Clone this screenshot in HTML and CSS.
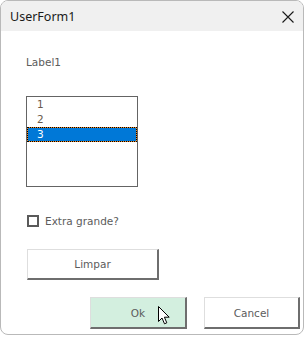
FILE: index.html
```html
<!DOCTYPE html>
<html lang="pt">
<head>
    <meta charset="UTF-8">
    <title>UserForm1</title>
    <link rel="stylesheet" href="styles.css">
</head>
<body>
    <div class="window">
        <div class="titlebar">
            <span class="title">UserForm1</span>
            <svg class="close" width="12" height="12" viewBox="0 0 12 12">
                <path d="M0.5 0.5 L11.5 11.5 M11.5 0.5 L0.5 11.5" stroke="#1a1a1a" stroke-width="1.1"/>
            </svg>
        </div>
        <div class="form">
            <div class="label">Label1</div>
            <div class="listbox">
                <div class="item">1</div>
                <div class="item">2</div>
                <div class="item selected">3</div>
            </div>
            <label class="check">
                <span class="box"></span>
                <span>Extra grande?</span>
            </label>
            <button class="btn btn-wide">Limpar</button>
            <div class="actions">
                <button class="btn btn-ok">Ok
                    <svg class="cursor" width="13" height="19" viewBox="0 0 13 19">
                        <path d="M0.5 0.5 L0.5 15.5 L4 12 L6.5 17.8 L8.8 16.8 L6.4 11.2 L11.2 11.2 Z" fill="#fff" stroke="#000" stroke-width="1" stroke-linejoin="round"/>
                    </svg>
                </button>
                <button class="btn btn-cancel">Cancel</button>
            </div>
        </div>
    </div>
</body>
</html>
```

FILE: styles.css
```css
body {
    margin: 0;
    background-color: #fff;
    font-family: "DejaVu Sans", Tahoma, sans-serif;
    font-size: 10.5px;
    color: #5c5c5c;
}
.window {
    width: 302px;
    height: 333px;
    border: 1px solid #b9b9b9;
    border-radius: 8px;
    overflow: hidden;
    background: #fff;
}
.titlebar {
    height: 30px;
    background-color: #f0f0f0;
    display: flex;
    align-items: center;
    justify-content: space-between;
    padding: 0 9px 0 9px;
}
.title {
    font-family: "Noto Sans", "Open Sans", sans-serif;
    font-size: 12.5px;
    color: #1a1a1a;
}
.close {
    margin-top: 1px;
}
.form {
    padding: 25px 0 0 25px;
}
.label {
    line-height: 13px;
    height: 13px;
    margin-bottom: 27px;
}
.listbox {
    width: 110px;
    height: 89px;
    border: 1px solid #646464;
    margin-bottom: 27px;
}
.item {
    height: 15px;
    line-height: 15px;
    padding-left: 10px;
    box-sizing: border-box;
    color: #6a5a4c;
}
.selected {
    color: #fff;
    border: 1px dotted #000;
    padding-left: 9px;
    line-height: 13px;
    background: linear-gradient(#0078d7, #0078d7) padding-box, #f08a24 border-box;
}
.check {
    display: flex;
    align-items: center;
    gap: 6px;
    margin-left: 1px;
    height: 13px;
    margin-bottom: 22px;
}
.box {
    width: 8px;
    height: 8px;
    border: 2px solid #5a5a5a;
}
.btn {
    font-family: "DejaVu Sans", Tahoma, sans-serif;
    font-size: 10.5px;
    color: #5c5c5c;
    background: #fff;
    border-top: 1px solid #dedede;
    border-left: 1px solid #dedede;
    border-right: 2px solid #6e6e6e;
    border-bottom: 2px solid #6e6e6e;
    padding: 0;
}
.btn-wide {
    display: block;
    margin-left: 1px;
    width: 132px;
    height: 31px;
}
.actions {
    display: flex;
    gap: 17px;
    margin-top: 17px;
    margin-left: 64px;
}
.btn-ok {
    width: 97px;
    height: 32px;
    background-color: #d3efdf;
    position: relative;
}
.btn-cancel {
    width: 96px;
    height: 32px;
}
.cursor {
    position: absolute;
    left: 67px;
    top: 8px;
}
```
